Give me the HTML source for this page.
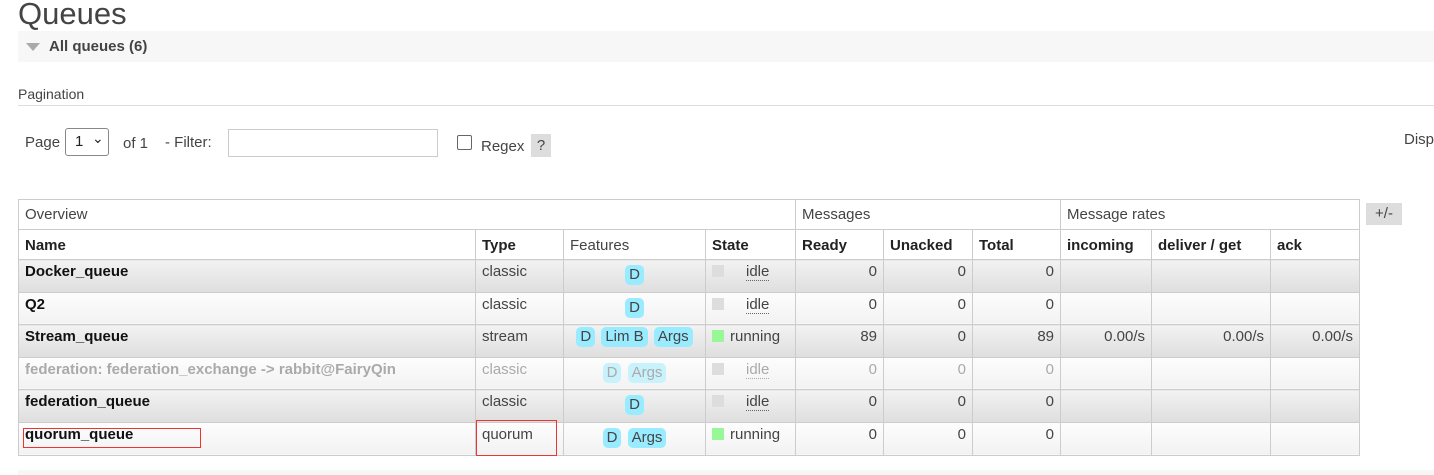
<!DOCTYPE html>
<html><head><meta charset="utf-8"><style>
body{margin:0;width:1434px;height:475px;overflow:hidden;background:#fff;font-family:"Liberation Sans",sans-serif;color:#444;font-size:15px;position:relative}
.a{position:absolute;white-space:nowrap}
h1{position:absolute;left:18px;top:-4px;margin:0;font-weight:normal;font-size:31px;color:#444}
table{position:absolute;left:18px;top:199px;border-collapse:collapse;table-layout:fixed}
td,th{border:1px solid #ccc;padding:0 6px;font-size:15px;white-space:nowrap;overflow:hidden}
th{text-align:left;font-weight:bold;color:#222}
tr.h1 td{height:29px;background:#fff;font-weight:normal;color:#444}
tr.h2 th{height:28px;background:#fff;padding-top:1px}
tr.r td{height:28.6px;vertical-align:top;padding-top:3px}
tr.o td{background:linear-gradient(#f2f2f2,#dedede)}
tr.e td{background:linear-gradient(#fdfdfd,#f2f2f2)}
.n{font-weight:bold;color:#111}
.num{text-align:right}
.c{text-align:center}
.b{display:inline-block;background:#99ebff;border-radius:5px;padding:1px 4px;margin:2px 1px 0;line-height:18px}
.g{color:#aaa}
.g .b{background:#c8f2fc;color:#aaa}
.sq{display:inline-block;width:12px;height:12px;background:#ddd;vertical-align:-1px;margin-right:6px}
.run{background:#98f898}
.idle{border-bottom:1px dotted #666}
</style></head><body>
<h1>Queues</h1>
<div class="a" style="left:18px;top:31px;width:1416px;height:31px;background:#f7f7f7"></div>
<div class="a" style="left:26px;top:43px;width:0;height:0;border-left:7px solid transparent;border-right:7px solid transparent;border-top:8px solid #aaa"></div>
<div class="a" style="left:49px;top:38px;font-weight:bold;color:#444;font-size:15px">All queues (6)</div>
<div class="a" style="left:18px;top:86px;font-size:14px">Pagination</div>
<div class="a" style="left:18px;top:105px;width:1416px;height:1px;background:#ddd"></div>
<div class="a" style="left:25px;top:134px">Page</div>
<div class="a" style="left:65px;top:128px;width:44px;height:28px;border:1px solid #888;border-radius:3px;box-sizing:border-box;background:#fff"><span style="position:absolute;left:9px;top:4px;color:#222">1</span><span style="position:absolute;left:26px;top:1px;color:#222;font-size:14px">&#8964;</span></div>
<div class="a" style="left:123px;top:135px">of 1</div>
<div class="a" style="left:165px;top:134px">- Filter:</div>
<div class="a" style="left:228px;top:129px;width:210px;height:28px;border:1px solid #ccc;box-sizing:border-box"></div>
<div class="a" style="left:457px;top:135px;width:13px;height:13px;border:1px solid #666;border-radius:2px"></div>
<div class="a" style="left:481px;top:138px">Regex</div>
<div class="a" style="left:531px;top:134px;width:20px;height:23px;background:#ddd;text-align:center;line-height:23px">?</div>
<div class="a" style="left:1404px;top:131px">Disp</div>
<div class="a" style="left:1366px;top:203px;width:36px;height:22px;background:#ddd;text-align:center;line-height:22px">+/-</div>
<table>
<colgroup><col style="width:457px"><col style="width:88px"><col style="width:142px"><col style="width:90px"><col style="width:88px"><col style="width:89px"><col style="width:88px"><col style="width:91px"><col style="width:119px"><col style="width:89px"></colgroup>
<tr class="h1"><td colspan="4">Overview</td><td colspan="3">Messages</td><td colspan="3">Message rates</td></tr>
<tr class="h2"><th>Name</th><th>Type</th><th style="font-weight:normal;color:#444">Features</th><th>State</th><th>Ready</th><th>Unacked</th><th>Total</th><th>incoming</th><th>deliver / get</th><th>ack</th></tr>
<tr class="r o"><td class="n">Docker_queue</td><td>classic</td><td class="c"><span class="b">D</span></td><td><span class="sq"></span><span class="idle" style="margin-left:16px">idle</span></td><td class="num">0</td><td class="num">0</td><td class="num">0</td><td></td><td></td><td></td></tr>
<tr class="r e"><td class="n">Q2</td><td>classic</td><td class="c"><span class="b">D</span></td><td><span class="sq"></span><span class="idle" style="margin-left:16px">idle</span></td><td class="num">0</td><td class="num">0</td><td class="num">0</td><td></td><td></td><td></td></tr>
<tr class="r o"><td class="n">Stream_queue</td><td>stream</td><td class="c" style="padding:0 2px"><span class="b">D</span> <span class="b">Lim B</span> <span class="b">Args</span></td><td><span class="sq run"></span>running</td><td class="num">89</td><td class="num">0</td><td class="num">89</td><td class="num">0.00/s</td><td class="num">0.00/s</td><td class="num">0.00/s</td></tr>
<tr class="r e g"><td class="n" style="color:#aaa">federation: federation_exchange -&gt; rabbit@FairyQin</td><td>classic</td><td class="c"><span class="b">D</span> <span class="b">Args</span></td><td><span class="sq"></span><span class="idle" style="margin-left:16px;border-color:#aaa">idle</span></td><td class="num">0</td><td class="num">0</td><td class="num">0</td><td></td><td></td><td></td></tr>
<tr class="r o"><td class="n">federation_queue</td><td>classic</td><td class="c"><span class="b">D</span></td><td><span class="sq"></span><span class="idle" style="margin-left:16px">idle</span></td><td class="num">0</td><td class="num">0</td><td class="num">0</td><td></td><td></td><td></td></tr>
<tr class="r e"><td class="n">quorum_queue</td><td>quorum</td><td class="c"><span class="b">D</span> <span class="b">Args</span></td><td><span class="sq run"></span>running</td><td class="num">0</td><td class="num">0</td><td class="num">0</td><td></td><td></td><td></td></tr>
</table>
<div class="a" style="left:23px;top:428px;width:176px;height:18px;border:1px solid #e33"></div>
<div class="a" style="left:476px;top:420px;width:79px;height:34px;border:1px solid #e33"></div>
<div class="a" style="left:18px;top:470px;width:1416px;height:5px;background:#f7f7f7"></div>
</body></html>
